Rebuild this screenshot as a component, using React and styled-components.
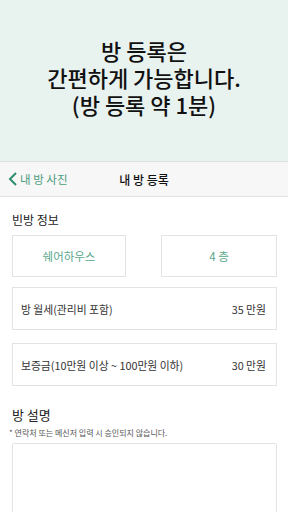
import styled, { createGlobalStyle } from "styled-components";

const GlobalStyle = createGlobalStyle`
  html, body {
    margin: 0;
    padding: 0;
    background: #ffffff;
    font-family: "Noto Sans CJK KR", "Noto Sans", sans-serif;
  }
`;

export default function App() {
  return (
    <>
      <GlobalStyle />
      <Page>
        <Banner>
          방 등록은
          <br />
          간편하게 가능합니다.
          <br />
          (방 등록 약 1분)
        </Banner>
        <NavBar>
          <BackLink>
            <svg width="10" height="14" viewBox="0 0 10 14">
              <path
                d="M8 1 L2 7 L8 13"
                fill="none"
                stroke="#2f8f6d"
                strokeWidth="2"
              />
            </svg>
            <span>내 방 사진</span>
          </BackLink>
          <NavTitle>내 방 등록</NavTitle>
        </NavBar>
        <Content>
          <SectionTitle>빈방 정보</SectionTitle>
          <Choices>
            <Choice>쉐어하우스</Choice>
            <Choice>4 층</Choice>
          </Choices>
          <Field>
            <span>방 월세(관리비 포함)</span>
            <span>35 만원</span>
          </Field>
          <Field>
            <span>보증금(10만원 이상 ~ 100만원 이하)</span>
            <span>30 만원</span>
          </Field>
          <DescTitle>방 설명</DescTitle>
          <Note>* 연락처 또는 메신저 입력 시 승인되지 않습니다.</Note>
          <TextBox />
        </Content>
      </Page>
    </>
  );
}

const Page = styled.div`
  width: 288px;
  height: 512px;
  overflow: hidden;
`;

const Banner = styled.div`
  height: 162px;
  box-sizing: border-box;
  padding-top: 37px;
  background: #e8f2ef;
  border-bottom: 1px solid #d9e2df;
  text-align: center;
  font-size: 22px;
  font-weight: 500;
  line-height: 27px;
  color: #111;
`;

const NavBar = styled.div`
  position: relative;
  height: 34px;
  display: flex;
  align-items: center;
  justify-content: center;
  background: #f7f7f7;
  border-bottom: 1px solid #e2e2e2;
`;

const BackLink = styled.div`
  position: absolute;
  left: 8px;
  top: 0;
  bottom: 0;
  display: flex;
  align-items: center;
  gap: 2px;
  font-size: 11.5px;
  color: #4c9c80;
`;

const NavTitle = styled.div`
  font-size: 12px;
  font-weight: 500;
  color: #111;
`;

const Content = styled.div`
  padding: 15px 11px 0 12px;
  display: flex;
  flex-direction: column;
`;

const SectionTitle = styled.div`
  font-size: 12px;
  line-height: 16px;
  color: #222;
`;

const Choices = styled.div`
  margin-top: 7px;
  display: grid;
  grid-template-columns: 114px 116px;
  justify-content: space-between;
`;

const Choice = styled.div`
  height: 42px;
  box-sizing: border-box;
  border: 1px solid #e3e3e3;
  display: flex;
  align-items: center;
  justify-content: center;
  font-size: 11.5px;
  color: #5aa88b;
`;

const Field = styled.div`
  margin-top: 10px;
  height: 43px;
  box-sizing: border-box;
  padding: 0 10px 0 8px;
  border: 1px solid #e3e3e3;
  display: flex;
  align-items: center;
  justify-content: space-between;
  font-size: 10.8px;
  color: #333;
  & + & {
    margin-top: 13px;
  }
`;

const DescTitle = styled.div`
  margin-top: 20px;
  font-size: 13px;
  line-height: 18px;
  color: #222;
`;

const Note = styled.div`
  margin-top: 3px;
  margin-left: -3px;
  font-size: 8px;
  line-height: 11px;
  color: #555;
`;

const TextBox = styled.div`
  margin-top: 5px;
  height: 100px;
  border: 1px solid #e3e3e3;
  border-radius: 2px;
`;
